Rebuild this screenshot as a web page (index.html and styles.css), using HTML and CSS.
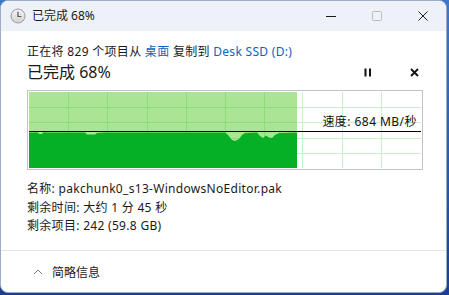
FILE: index.html
```html
<!DOCTYPE html>
<html lang="zh-CN">
<head>
<meta charset="utf-8">
<title>已完成 68%</title>
<link rel="stylesheet" href="styles.css">
</head>
<body>
<div class="window">
  <div class="titlebar">
    <svg class="app-icon" width="16" height="16" viewBox="0 0 16 16">
      <defs>
        <linearGradient id="cg" x1="0" y1="0" x2="0" y2="1">
          <stop offset="0" stop-color="#f4f4f4"/>
          <stop offset="1" stop-color="#d2d2d2"/>
        </linearGradient>
      </defs>
      <circle cx="8" cy="8" r="7" fill="url(#cg)" stroke="#9a9a9a" stroke-width="1"/>
      <path d="M8 4 V8.5 H11" fill="none" stroke="#555" stroke-width="1.2" stroke-linecap="round"/>
    </svg>
    <span class="title">已完成 68%</span>
    <div class="caption">
      <div class="cbtn"><svg width="10" height="10" viewBox="0 0 10 10"><path d="M0 5.5 H10" stroke="#1a1a1a" stroke-width="1"/></svg></div>
      <div class="cbtn"><svg width="10" height="10" viewBox="0 0 10 10"><rect x="0.5" y="0.5" width="9" height="9" rx="1" fill="none" stroke="#bdbdbd" stroke-width="1"/></svg></div>
      <div class="cbtn"><svg width="10" height="10" viewBox="0 0 10 10"><path d="M0.5 0.5 L9.5 9.5 M9.5 0.5 L0.5 9.5" stroke="#1a1a1a" stroke-width="1"/></svg></div>
    </div>
  </div>

  <div class="content">
    <div class="summary">正在将 829 个项目从 <span class="link">桌面</span> 复制到 <span class="link">Desk SSD (D:)</span></div>
    <div class="status-row">
      <div class="status">已完成 68%</div>
      <div class="actions">
        <div class="abtn"><svg width="8" height="9" viewBox="0 0 8 9"><rect x="0.5" y="0.5" width="2" height="8" fill="#111"/><rect x="5" y="0.5" width="2" height="8" fill="#111"/></svg></div>
        <div class="abtn"><svg width="9" height="9" viewBox="0 0 9 9"><path d="M1 1 L8 8 M8 1 L1 8" stroke="#111" stroke-width="1.8"/></svg></div>
      </div>
    </div>

    <div class="chart">
      <svg class="graph" width="392" height="76" viewBox="0 0 392 76">
        <g stroke="#c9efcb" stroke-width="1">
          <path d="M0 15.5 H392 M0 30.5 H392 M0 46.5 H392 M0 61.5 H392"/>
          <path d="M39.5 0 V76 M78.5 0 V76 M118.5 0 V76 M157.5 0 V76 M196.5 0 V76 M235.5 0 V76 M273.5 0 V76 M313.5 0 V76 M352.5 0 V76"/>
        </g>
        <rect x="0" y="0" width="268" height="76" fill="#a9e594"/>
        <g stroke="#90da7c" stroke-width="1">
          <path d="M0 15.5 H268 M0 30.5 H268 M0 46.5 H268 M0 61.5 H268"/>
          <path d="M39.5 0 V76 M78.5 0 V76 M118.5 0 V76 M157.5 0 V76 M196.5 0 V76 M235.5 0 V76"/>
        </g>
        <path fill="#06b025" d="M0 40.5 L9 40.5 L10 42 L13 42 L14 40.5 L56 40.5 L58 42.5 L66 42.5 L68 41 L75 40.5 L196 40.5 L199 43 L203 48 L206 49 L210 47 L213 43 L216 41 L228 40.5 L231 44 L234 46 L237 43.5 L240 45.5 L243 46 L246 43 L250 41 L268 40.5 L268 76 L0 76 Z"/>
        <path d="M0 39.5 H392" stroke="#000" stroke-width="1"/>
      </svg>
      <div class="speed">速度: 684 MB/秒</div>
    </div>

    <div class="details">
      <div>名称: pakchunk0_s13-WindowsNoEditor.pak</div>
      <div>剩余时间: 大约 1 分 45 秒</div>
      <div>剩余项目: 242 (59.8 GB)</div>
    </div>
  </div>

  <div class="footer">
    <svg class="chev" width="10" height="6" viewBox="0 0 10 6"><path d="M1 5 L5 1 L9 5" fill="none" stroke="#7a7a7a" stroke-width="1"/></svg>
    <span>简略信息</span>
  </div>
</div>
</body>
</html>
```

FILE: styles.css
```css
* { box-sizing: border-box; }
html, body { margin: 0; padding: 0; }
body {
  width: 449px;
  height: 295px;
  background: linear-gradient(180deg, #3f78c8 0%, #2559ad 60%, #1c3f8f 100%);
  font-family: "Noto Sans", "Noto Sans CJK SC", sans-serif;
  color: #1a1a1a;
  overflow: hidden;
}
.window {
  width: 447px;
  height: 293px;
  background: #ffffff;
  border: 1px solid #9eaec6;
  border-radius: 8px;
  overflow: hidden;
  display: flex;
  flex-direction: column;
}
.titlebar {
  height: 30px;
  flex: none;
  background: #eef2f8;
  display: flex;
  align-items: center;
  padding-left: 9px;
}
.app-icon { flex: none; }
.title {
  margin-left: 6px;
  font-size: 12px;
  line-height: 16px;
  flex: 1;
}
.caption { display: flex; height: 100%; }
.cbtn {
  width: 46px;
  height: 100%;
  display: flex;
  align-items: center;
  justify-content: center;
}
.content {
  padding: 12px 0 0 26px;
  flex: 1;
}
.summary {
  font-size: 12px;
  line-height: 18px;
  letter-spacing: 0.3px;
}
.link { color: #0a64c2; }
.status-row {
  display: flex;
  align-items: center;
  height: 22px;
  width: 410px;
}
.status {
  font-size: 16px;
  line-height: 22px;
  flex: 1;
}
.actions { display: flex; }
.abtn {
  width: 46px;
  height: 22px;
  display: flex;
  align-items: center;
  justify-content: center;
}
.chart {
  position: relative;
  margin-top: 7px;
  width: 396px;
  height: 80px;
  border: 1px solid #c3c3c3;
  padding: 1px;
  background: #fff;
}
.graph { display: block; }
.speed {
  position: absolute;
  right: 5px;
  top: 22px;
  font-size: 12px;
  line-height: 18px;
  letter-spacing: 0.45px;
  color: #111;
}
.details {
  margin-top: 10px;
  font-size: 12px;
  line-height: 18.5px;
  letter-spacing: 0.3px;
}
.footer {
  flex: none;
  height: 42px;
  border-top: 1px solid #e3e3e3;
  display: flex;
  align-items: center;
  padding-left: 32px;
  font-size: 12px;
}
.chev { margin-right: 9px; }
```
